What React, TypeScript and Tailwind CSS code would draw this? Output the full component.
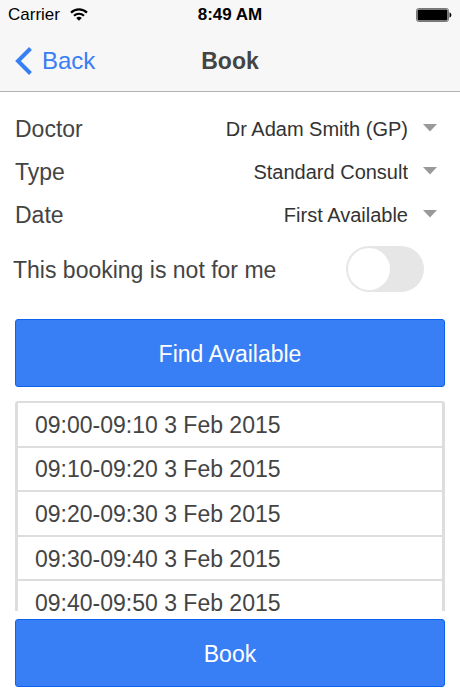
import React, { useState } from 'react';

interface PickerProps {
    id: string;
    label: string;
    options: string[];
}

const slots = [
    '09:00-09:10 3 Feb 2015',
    '09:10-09:20 3 Feb 2015',
    '09:20-09:30 3 Feb 2015',
    '09:30-09:40 3 Feb 2015',
    '09:40-09:50 3 Feb 2015',
];

const Picker: React.FC<PickerProps> = ({ id, label, options }) => (
    <div className="relative flex h-[43px] items-center">
        <label htmlFor={id} className="shrink-0 pt-0.5">{label}</label>
        <select
            id={id}
            className="h-full min-w-0 flex-1 cursor-pointer appearance-none bg-transparent pr-[37px] text-[20px] text-[#333] [text-align-last:right]"
        >
            {options.map((option) => (
                <option key={option}>{option}</option>
            ))}
        </select>
        <svg viewBox="0 0 14 8" className="pointer-events-none absolute top-[17px] right-2 h-2 w-3.5" aria-hidden="true">
            <path d="M0 0h14L7 7.5z" fill="#999" />
        </svg>
    </div>
);

const StatusBar = () => (
    <div className="grid h-[30px] grid-cols-3 items-center px-2 text-[17px] text-black">
        <div className="flex items-center gap-2.5">
            <span>Carrier</span>
            <svg viewBox="0 0 18 14" className="h-3.5 w-[18px]" fill="none" stroke="#000" strokeWidth="2.2" aria-hidden="true">
                <path d="M1 4.6C5.5 0.3 12.5 0.3 17 4.6" />
                <path d="M4 7.7C6.8 5.1 11.2 5.1 14 7.7" />
                <path d="M6.2 10a4 4 0 0 1 5.6 0L9 12.8z" fill="#000" stroke="none" />
            </svg>
        </div>
        <span className="text-center font-bold">8:49 AM</span>
        <svg viewBox="0 0 36 14" className="h-3.5 w-9 justify-self-end" aria-hidden="true">
            <rect x="0.5" y="0.5" width="32" height="13" rx="2" fill="#f7f7f7" stroke="#777" />
            <rect x="1.5" y="1.5" width="30" height="11" rx="1" fill="#000" />
            <path d="M33.5 4.5C36 5 36 9 33.5 9.5z" fill="#000" />
        </svg>
    </div>
);

const App: React.FC = () => {
    const [notForMe, setNotForMe] = useState(false);

    return (
        <div className="flex h-screen flex-col bg-white font-['Liberation_Sans',Arial,sans-serif] text-[23px] text-[#444]">
            <header className="shrink-0 border-b border-[#b2b2b2] bg-[#f7f7f7]">
                <StatusBar />
                <div className="grid h-[61px] grid-cols-3 items-center px-[15px]">
                    <button type="button" className="flex cursor-pointer items-center gap-2.5 justify-self-start text-[24px] text-[#387ef5]">
                        <svg viewBox="0 0 17 28" className="h-7 w-[17px]" fill="none" stroke="#387ef5" strokeWidth="4" aria-hidden="true">
                            <path d="M15.5 1.5L3 14l12.5 12.5" />
                        </svg>
                        Back
                    </button>
                    <h1 className="pt-0.5 text-center font-bold">Book</h1>
                </div>
            </header>

            <main className="flex min-h-0 flex-1 flex-col px-[15px] pt-[15px] pb-[3px]">
                <Picker id="doctor" label="Doctor" options={['Dr Adam Smith (GP)']} />
                <Picker id="type" label="Type" options={['Standard Consult', 'Long Consult']} />
                <Picker id="date" label="Date" options={['First Available']} />

                <label className="-ml-0.5 flex cursor-pointer items-center justify-between pt-[10px] pr-[21px]">
                    <span className="pt-0.5">This booking is not for me</span>
                    <input
                        type="checkbox"
                        checked={notForMe}
                        onChange={(e) => setNotForMe(e.target.checked)}
                        className="peer sr-only"
                    />
                    <span className="h-[46px] w-[78px] rounded-full bg-[#e6e6e6] p-0.5 peer-checked:bg-[#387ef5] peer-checked:pl-[34px]">
                        <span className="block size-[42px] rounded-full bg-white" />
                    </span>
                </label>

                <button
                    type="button"
                    className="mt-[27px] h-[68px] shrink-0 cursor-pointer rounded-[3px] border border-[#0c63ee] bg-[#387ef5] pt-0.5 text-white"
                >
                    Find Available
                </button>

                <div className="mt-[14px] min-h-0 flex-1 overflow-y-auto [scrollbar-width:none]">
                    <ul className="grid h-[223px] auto-rows-fr rounded-t-[3px] border-x-3 border-[#ddd]">
                        {slots.map((slot) => (
                            <li key={slot} className="border-t-2 border-[#ddd]">
                                <button type="button" className="flex h-full w-full cursor-pointer items-center px-[17px] pt-0.5 leading-none">
                                    {slot}
                                </button>
                            </li>
                        ))}
                    </ul>
                </div>

                <button
                    type="button"
                    className="mt-2 h-[68px] shrink-0 cursor-pointer rounded-[3px] border border-[#0c63ee] bg-[#387ef5] pt-0.5 text-white"
                >
                    Book
                </button>
            </main>
        </div>
    );
};

export default App;
